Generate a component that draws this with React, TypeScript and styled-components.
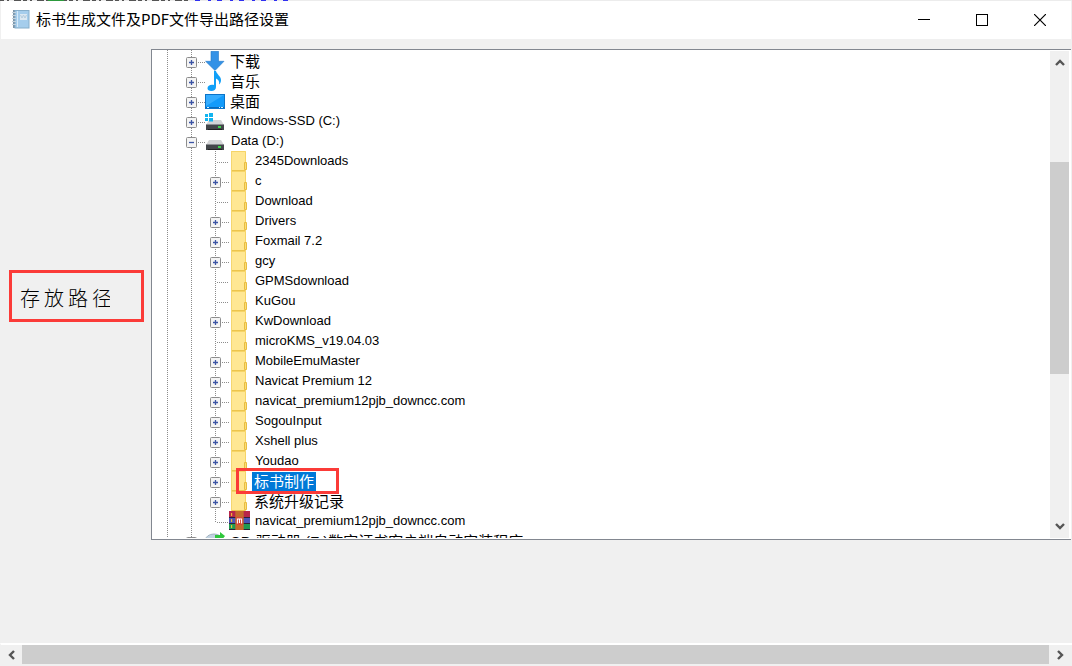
import React from 'react';
import styled, { createGlobalStyle, css } from 'styled-components';

const Global = createGlobalStyle`
  * { box-sizing: border-box; }
  body { margin: 0; background: #f0f0f0; }
  button { font: inherit; border: 0; padding: 0; background: transparent; }
`;

const Window = styled.div`
  display: flex;
  flex-direction: column;
  height: 100vh;
  min-height: 400px;
  overflow: hidden;
  background: #f0f0f0;
  color: #000;
  font-family: 'Liberation Sans', 'Noto Sans CJK SC', sans-serif;
`;

const Backdrop = styled.svg`
  display: block;
  flex: none;
  width: 100%;
  height: 1px;
`;

const TitleBar = styled.header`
  display: flex;
  align-items: center;
  flex: none;
  height: 38px;
  padding: 0 2px 0 11px;
  margin: 0 1px;
  background: #fff;
`;

const Title = styled.h1`
  flex: 1;
  margin: 0 0 2px 6px;
  font: 400 15px/20px 'Noto Sans CJK SC', sans-serif;
  white-space: nowrap;
`;

const Caption = styled.button`
  display: flex;
  align-items: center;
  justify-content: center;
  width: 58px;
  height: 38px;
`;

const Body = styled.main`
  display: flex;
  flex: 1;
  min-height: 0;
  padding: 10px 1px 103px 9px;
`;

const Side = styled.div`
  display: flex;
  align-items: center;
  flex: none;
  width: 142px;
  padding-top: 2px;
`;

const PathLabel = styled.div`
  width: 135px;
  height: 52px;
  padding: 8px 8px;
  border: 3px solid #fb3b38;
  color: #000;
  font: 300 20px/34px 'Noto Sans CJK SC', sans-serif;
  letter-spacing: 4px;
`;

const PathText = styled.div`
  width: 90px;
  overflow: hidden;
  white-space: nowrap;
`;

const Pane = styled.section`
  display: flex;
  flex: 1;
  min-width: 0;
  padding-bottom: 1px;
  border: 1px solid #828790;
  border-right: 0;
  background: #fff;
`;

const Tree = styled.ul`
  flex: 1;
  min-width: 0;
  margin: 0;
  padding: 1px 0 0;
  overflow: hidden;
  list-style: none;
  background:
    repeating-linear-gradient(#8c8c8c 0 1px, #fff 1px 2px) 15px 0 / 1px 100% no-repeat,
    repeating-linear-gradient(#8c8c8c 0 1px, #fff 1px 2px) 39px 0 / 1px 100% no-repeat,
    #fff;
`;

const Branch = styled.ul`
  margin: 0;
  padding: 0;
  list-style: none;
`;

const Row = styled.div<{ $deep?: boolean; $last?: boolean }>`
  display: flex;
  align-items: center;
  position: relative;
  height: 20px;
  padding-left: ${p => (p.$deep ? 58 : 34)}px;
  ${p => p.$deep && css<{ $last?: boolean }>`
    background: repeating-linear-gradient(#8c8c8c 0 1px, #fff 1px 2px) 63px 0 / 1px ${(q: { $last?: boolean }) => (q.$last ? '11px' : '100%')} no-repeat;
  `}
`;

const Toggle = styled.button`
  display: flex;
  flex: none;
  width: 11px;
  height: 11px;
  margin-top: 3px;
`;

const Stub = styled.span<{ $wide?: boolean }>`
  flex: none;
  width: ${p => (p.$wide ? 13 : 8)}px;
  height: 1px;
  margin: 3px 0 0 ${p => (p.$wide ? 6 : 0)}px;
  background: repeating-linear-gradient(90deg, #fff 0 1px, #8c8c8c 1px 2px);
`;

const IconBox = styled.span`
  display: flex;
  flex: none;
  justify-content: center;
  width: 20px;
  margin-right: 3px;
  svg { display: block; flex: none; }
`;

const Name = styled.span<{ $cjk?: boolean; $on?: boolean }>`
  padding: 0 ${p => (p.$cjk ? 2 : 3)}px;
  margin-top: ${p => (p.$cjk ? 1 : 0)}px;
  white-space: nowrap;
  font-size: ${p => (p.$cjk ? 15 : 13)}px;
  line-height: ${p => (p.$cjk ? 19 : 20)}px;
  color: ${p => (p.$on ? '#fff' : '#000')};
  background: ${p => (p.$on ? '#0078d7' : 'transparent')};
`;

const Mark = styled.span`
  position: absolute;
  left: 84px;
  top: -3px;
  z-index: 1;
  width: 103px;
  height: 26px;
  border: 3px solid #fb3b38;
`;

const VScroll = styled.div`
  display: flex;
  flex-direction: column;
  flex: none;
  width: 19px;
  margin: 1px 2px 0 0;
  background: #f0f0f0;
`;

const HScroll = styled.div`
  display: flex;
  flex: none;
  height: 23px;
  padding-right: 2px;
  border: solid #f0f0f0;
  border-top-color: #fff;
  border-width: 2px 0 2px 1px;
`;

const Arrow = styled.button<{ $side?: boolean }>`
  display: flex;
  align-items: center;
  justify-content: center;
  flex: none;
  width: ${p => (p.$side ? 21 : 19)}px;
  height: ${p => (p.$side ? 19 : 24)}px;
`;

const Gap = styled.div<{ $grow: number }>`
  flex: ${p => p.$grow} 1 0;
`;

const Thumb = styled(Gap)`
  background: #cdcdcd;
`;

const Chevron = ({ turn }: { turn: number }) => (
  <svg width="12" height="12" viewBox="0 0 12 12" aria-hidden="true">
    <path d="M2 8 L6 4 L10 8" fill="none" stroke="#555" strokeWidth="2.4" transform={`rotate(${turn} 6 6)`} />
  </svg>
);

const Notebook = () => (
  <svg width="18" height="20" viewBox="0 0 18 20" aria-hidden="true">
    <rect x="1" y="0" width="4" height="18" fill="#7d95a8" />
    <rect x="3" y=".5" width="14" height="17.500" fill="#a5cdec" stroke="#86aecb" />
    <rect x="5" y="1" width="1" height="16" fill="#d5e9f8" />
    <rect x="8" y="4" width="7" height="6" fill="#dbe8f2" />
    <path d="M8.500 5l1.500 3 1.500-3 1.500 3 1.500-3" stroke="#b4cbdc" fill="none" />
    <path d="M0 2.500h4M0 5.500h4M0 8.500h4M0 11.500h4M0 14.500h4" stroke="#c5d3dd" />
  </svg>
);

const Icon = ({ kind }: { kind: string }) => {
  if (kind === 'folder')
    return (
      <svg width="16" height="20" viewBox="0 0 16 20" aria-hidden="true">
        <rect x="0" y="0" width="15" height="20" fill="#ffe793" />
        <path d="M0 .5h14.500v12" fill="none" stroke="#f6d466" />
        <path d="M0 19.500h14.500" stroke="#ecc44d" />
        <path d="M.5 0v20" stroke="#f5d670" />
        <path d="M13.500 18.500v-7h2v7z" fill="#fbdc78" stroke="#e8bd40" />
      </svg>
    );
  if (kind === 'download')
    return (
      <svg width="20" height="20" viewBox="0 0 20 20" aria-hidden="true">
        <path d="M6 .3h7.500v10h5.500L10 19.500.6 10.300H6z" fill="#3492e6" stroke="#2478c8" strokeWidth=".6" />
      </svg>
    );
  if (kind === 'music')
    return (
      <svg width="20" height="20" viewBox="0 0 20 20" aria-hidden="true">
        <path d="M9 0h2c.3 3 5 5 5 9 0 2-.8 3.500-2 4.500.8-3-.6-5-3-6V16c0 2.500-2 4-4.700 4-2.300 0-3.800-1-3.800-2.700 0-2 2-3.500 4.500-3.500.8 0 1.500.1 2 .3z" fill="#10a0f8" />
      </svg>
    );
  if (kind === 'desktop')
    return (
      <svg width="20" height="20" viewBox="0 0 20 20" aria-hidden="true">
        <rect x=".5" y="3.500" width="19" height="14" fill="#129bfb" stroke="#0c74c8" />
        <path d="M1 4h18L1 15z" fill="#35adff" />
        <path d="M1 16.500h18" stroke="#0a69b8" />
        <path d="M2 16.500h2M14 16.500h1M16 16.500h2" stroke="#d6efff" />
      </svg>
    );
  if (kind === 'system' || kind === 'drive')
    return (
      <svg width="20" height="20" viewBox="0 0 20 20" aria-hidden="true">
        <path d="M4 9h12l3 5H1z" fill="#d3d4d6" />
        <path d="M1 13.500h18V19H1z" fill="#43464a" />
        <path d="M1 13.500h18" stroke="#8b8e92" />
        <path d="M3 18.500h14" stroke="#222" />
        <rect x="13" y="15" width="3" height="2" fill="#3fd64b" />
        {kind === 'system' && <path d="M0 3h3v3H0zM4 2h4v4H4zM0 7h3v3H0zM4 7h4v3.500H4z" fill="#12b4ef" />}
      </svg>
    );
  if (kind === 'disc')
    return (
      <svg width="20" height="20" viewBox="0 0 20 20" aria-hidden="true">
        <ellipse cx="9" cy="9" rx="8.500" ry="6" fill="#c3d3e2" stroke="#a3b4c2" />
        <path d="M10 4h5V1l5 4-4 5V8h-6z" fill="#2fc73c" />
      </svg>
    );
  return (
    <svg width="21" height="20" viewBox="0 0 20 20" preserveAspectRatio="none" aria-hidden="true">
      <rect x="0" y="0" width="20" height="6" fill="#b8264a" />
      <rect x="0" y="6" width="20" height="7" fill="#4a55b8" />
      <rect x="0" y="13" width="20" height="6" fill="#1f9a52" />
      <path d="M0 6.500h20M0 12.500h20M0 18.500h20" stroke="#2c2238" />
      <path d="M2.500 2v3M2.500 8v3M2.500 14v3" stroke="#f3c531" />
      <rect x="6" y="0" width="8" height="19" fill="#c56a2c" />
      <rect x="7" y="6" width="6" height="8" fill="#d9463a" />
      <path d="M8 12.500V8h4v4.500M10 8v4" stroke="#fff" fill="none" />
    </svg>
  );
};

type Item = { name: string; icon: string; toggle?: '+' | '-'; cjk?: boolean; on?: boolean; children?: Item[] };

const dir = (name: string, toggle?: '+', extra: Partial<Item> = {}): Item => ({ name, icon: 'folder', toggle, ...extra });

const items: Item[] = [
  { name: '下载', icon: 'download', toggle: '+', cjk: true },
  { name: '音乐', icon: 'music', toggle: '+', cjk: true },
  { name: '桌面', icon: 'desktop', toggle: '+', cjk: true },
  { name: 'Windows-SSD (C:)', icon: 'system', toggle: '+' },
  {
    name: 'Data (D:)', icon: 'drive', toggle: '-',
    children: [
      dir('2345Downloads'),
      dir('c', '+'),
      dir('Download'),
      dir('Drivers', '+'),
      dir('Foxmail 7.2', '+'),
      dir('gcy', '+'),
      dir('GPMSdownload'),
      dir('KuGou'),
      dir('KwDownload', '+'),
      dir('microKMS_v19.04.03'),
      dir('MobileEmuMaster', '+'),
      dir('Navicat Premium 12', '+'),
      dir('navicat_premium12pjb_downcc.com', '+'),
      dir('SogouInput', '+'),
      dir('Xshell plus', '+'),
      dir('Youdao', '+'),
      dir('标书制作', '+', { cjk: true, on: true }),
      dir('系统升级记录', '+', { cjk: true }),
      { name: 'navicat_premium12pjb_downcc.com', icon: 'archive' },
    ],
  },
  { name: 'CD 驱动器 (F:)数字证书客户端自动安装程序', icon: 'disc', toggle: '+', cjk: true },
];

const Node = ({ item, deep, last }: { item: Item; deep?: boolean; last?: boolean }) => (
  <li>
    <Row $deep={deep} $last={last}>
      {item.toggle && (
        <Toggle aria-label={`${item.toggle === '+' ? '展开' : '折叠'} ${item.name}`}>
          <svg width="11" height="11" viewBox="0 0 11 11" aria-hidden="true">
            <rect x=".5" y=".5" width="10" height="10" rx="1" fill="#f4f4f4" stroke="#8c8c8c" />
            <path d={item.toggle === '+' ? 'M3 5.500h5M5.500 3v5' : 'M3 5.500h5'} stroke="#3b54a5" strokeWidth="1.3" />
          </svg>
        </Toggle>
      )}
      <Stub $wide={!item.toggle} />
      <IconBox>
        <Icon kind={item.icon} />
      </IconBox>
      <Name $cjk={item.cjk} $on={item.on}>{item.name}</Name>
      {item.on && <Mark />}
    </Row>
    {item.children && (
      <Branch>
        {item.children.map((c, i) => (
          <Node key={i} item={c} deep last={i === item.children!.length - 1} />
        ))}
      </Branch>
    )}
  </li>
);

export default function App() {
  return (
    <Window>
      <Global />
      <Backdrop aria-hidden="true">
        <rect width="100%" height="1" fill="#ececec" />
        <path d="M0 .5h190" stroke="#555" strokeDasharray="4 3 2 5 7 2" />
        <path d="M48 .5h16" stroke="#2c9a3c" />
        <path d="M195 .5h100" stroke="#3030f0" strokeDasharray="5 8 3 6" />
      </Backdrop>
      <TitleBar>
        <Notebook />
        <Title>标书生成文件及PDF文件导出路径设置</Title>
        <Caption aria-label="最小化">
          <svg width="12" height="12"><path d="M0 5.500h12" stroke="#000" /></svg>
        </Caption>
        <Caption aria-label="最大化">
          <svg width="12" height="12"><rect x=".5" y=".5" width="11" height="11" fill="none" stroke="#000" /></svg>
        </Caption>
        <Caption aria-label="关闭">
          <svg width="12" height="12"><path d="M0 0l12 12M12 0L0 12" stroke="#000" strokeWidth="1.200" /></svg>
        </Caption>
      </TitleBar>
      <Body>
        <Side>
          <PathLabel>
            <PathText>存放路径</PathText>
          </PathLabel>
        </Side>
        <Pane>
          <Tree>
            {items.map((it, i) => <Node key={i} item={it} />)}
          </Tree>
          <VScroll>
            <Arrow aria-label="向上滚动"><Chevron turn={0} /></Arrow>
            <Gap $grow={87} />
            <Thumb $grow={212} />
            <Gap $grow={140} />
            <Arrow aria-label="向下滚动"><Chevron turn={180} /></Arrow>
          </VScroll>
        </Pane>
      </Body>
      <HScroll>
        <Arrow $side aria-label="向左滚动"><Chevron turn={-90} /></Arrow>
        <Thumb $grow={1} />
        <Arrow $side aria-label="向右滚动"><Chevron turn={90} /></Arrow>
      </HScroll>
    </Window>
  );
}
